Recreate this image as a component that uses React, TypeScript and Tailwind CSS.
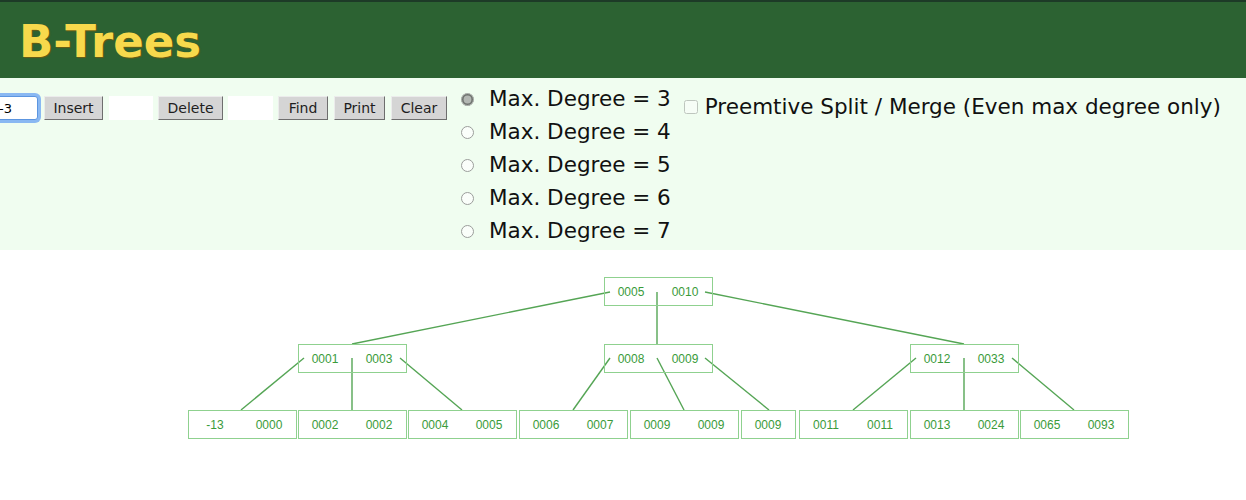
import { useState } from 'react';

type TreeNode = { x: number; y: number; keys: string[] };

const SLOT = 54;
const BOX_H = 28;

const nodes: TreeNode[] = [
  { x: 604, y: 27, keys: ['0005', '0010'] },
  { x: 298, y: 94, keys: ['0001', '0003'] },
  { x: 604, y: 94, keys: ['0008', '0009'] },
  { x: 910, y: 94, keys: ['0012', '0033'] },
  { x: 188, y: 160, keys: ['-13', '0000'] },
  { x: 298, y: 160, keys: ['0002', '0002'] },
  { x: 408, y: 160, keys: ['0004', '0005'] },
  { x: 519, y: 160, keys: ['0006', '0007'] },
  { x: 630, y: 160, keys: ['0009', '0009'] },
  { x: 741, y: 160, keys: ['0009'] },
  { x: 799, y: 160, keys: ['0011', '0011'] },
  { x: 910, y: 160, keys: ['0013', '0024'] },
  { x: 1020, y: 160, keys: ['0065', '0093'] },
];

// [x1, y1, x2, y2]
const edges: number[][] = [
  [610, 42, 352, 94],
  [657, 42, 657, 94],
  [705, 42, 964, 94],
  [304, 108, 241, 160],
  [352, 108, 352, 160],
  [400, 108, 462, 160],
  [610, 108, 573, 160],
  [657, 108, 684, 160],
  [705, 108, 769, 160],
  [916, 108, 853, 160],
  [964, 108, 964, 160],
  [1012, 108, 1074, 160],
];

const Btn = ({ label, w }: { label: string; w: string }) => (
  <button
    type="button"
    className={`${w} h-[24px] bg-[#d5d5d5] text-[14px] text-[#1e1e1e] border border-t-[#ececec] border-l-[#ececec] border-b-[#6e6e6e] border-r-[#6e6e6e] leading-none`}
  >
    {label}
  </button>
);

const App = () => {
  const [degree, setDegree] = useState(3);
  const [preempt, setPreempt] = useState(false);

  return (
    <div className="w-[1246px] h-[500px] bg-white overflow-hidden" style={{ fontFamily: '"DejaVu Sans", Verdana, sans-serif' }}>
      <div className="h-[78px] bg-[#2c6232] border-t-2 border-[#1d3a27] flex items-center pl-[19px]">
        <h1 className="text-[45px] font-bold text-[#f7d94c] leading-none mt-[3px] [text-shadow:1px_1px_1px_#6b5a12]">
          B-Trees
        </h1>
      </div>

      <div className="h-[172px] bg-[#f0fdf0] flex items-start pt-[5px]">
        <div className="flex items-center mt-[13px]">
          <input
            defaultValue="-3"
            className="-ml-[4px] w-[42px] h-[24px] bg-white px-[2px] text-[13px] text-black rounded-[3px] outline-none ring-[3px] ring-[#8ab8f2] border border-[#5c95e0]"
          />
          <div className="ml-[6px]"><Btn label="Insert" w="w-[59px]" /></div>
          <input className="ml-[6px] w-[44px] h-[24px] bg-white outline-none" />
          <div className="ml-[5px]"><Btn label="Delete" w="w-[65px]" /></div>
          <input className="ml-[5px] w-[45px] h-[24px] bg-white outline-none" />
          <div className="ml-[5px]"><Btn label="Find" w="w-[50px]" /></div>
          <div className="ml-[6px]"><Btn label="Print" w="w-[51px]" /></div>
          <div className="ml-[6px]"><Btn label="Clear" w="w-[56px]" /></div>
        </div>

        <div className="flex flex-col ml-[14px]">
          {[3, 4, 5, 6, 7].map((d) => (
            <label key={d} className="h-[33px] flex items-center cursor-pointer">
              <input
                type="radio"
                name="degree"
                checked={degree === d}
                onChange={() => setDegree(d)}
                className="w-[13px] h-[13px] m-0 accent-[#9a9a9a] opacity-70"
              />
              <span className="ml-[15px] text-[21.5px] text-[#111]">Max. Degree = {d}</span>
            </label>
          ))}
        </div>

        <label className="flex items-center ml-[13px] mt-[8px] cursor-pointer">
          <input
            type="checkbox"
            checked={preempt}
            onChange={() => setPreempt(!preempt)}
            className="w-[14px] h-[14px] m-0 opacity-40"
          />
          <span className="ml-[7px] text-[21.5px] text-[#111]">Preemtive Split / Merge (Even max degree only)</span>
        </label>
      </div>

      <svg width="1246" height="250" className="block">
        {edges.map(([x1, y1, x2, y2], i) => (
          <line key={i} x1={x1} y1={y1} x2={x2} y2={y2} stroke="#55a555" strokeWidth="1.4" />
        ))}
        {nodes.map((n, i) => (
          <g key={i}>
            <rect
              x={n.x + 0.5}
              y={n.y + 0.5}
              width={n.keys.length * SLOT}
              height={BOX_H}
              fill="white"
              fillOpacity="0"
              stroke="#8fd18f"
              strokeWidth="1"
            />
            {n.keys.map((k, j) => (
              <text
                key={j}
                x={n.x + SLOT / 2 + j * SLOT}
                y={n.y + 19}
                textAnchor="middle"
                fontSize="12"
                fill="#3a9b3a"
                fontFamily='"Liberation Sans", Arial, sans-serif'
              >
                {k}
              </text>
            ))}
          </g>
        ))}
      </svg>
    </div>
  );
};

export default App;
